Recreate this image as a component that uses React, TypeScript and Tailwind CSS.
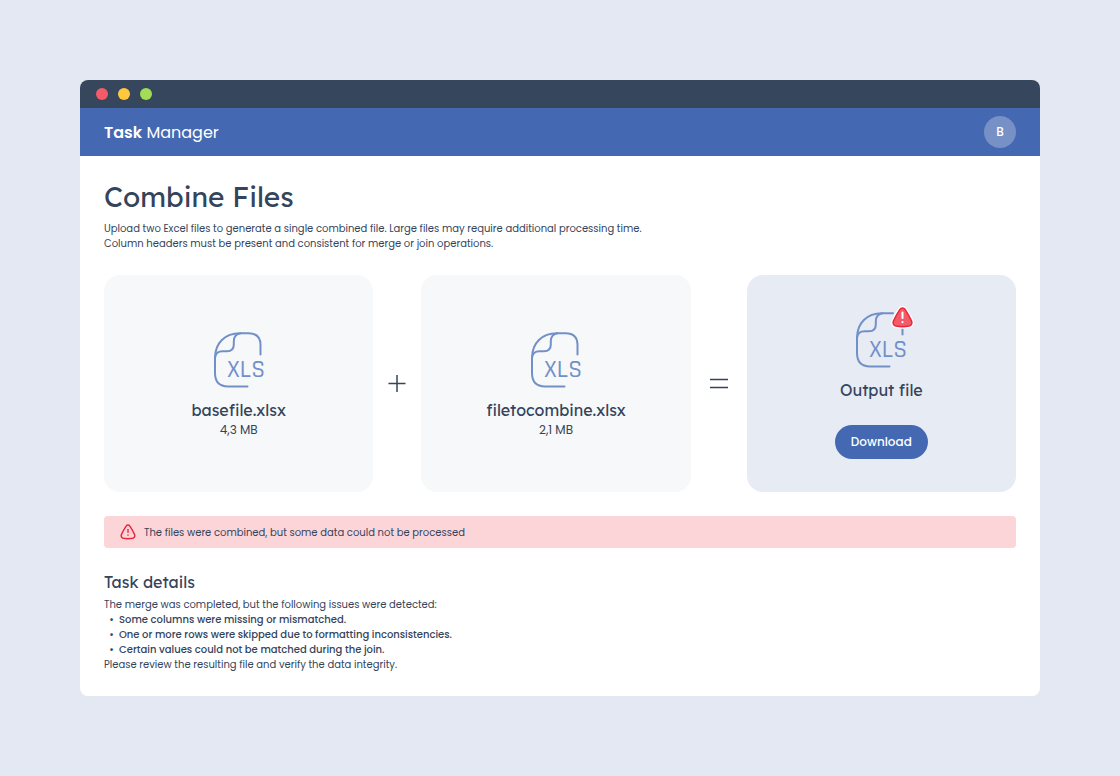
import type { ReactNode } from "react";

const issues = [
  "Some columns were missing or mismatched.",
  "One or more rows were skipped due to formatting inconsistencies.",
  "Certain values could not be matched during the join.",
];

const TRIANGLE_PATH =
  "M8.4 2.9C9.6.9 12.4.9 13.6 2.9C16 6.6 18.4 10.6 20.1 14.6C21 17 20 19 17.6 19.6C13.4 20.4 8.6 20.4 4.4 19.6C2 19 1 17 1.9 14.6C3.6 10.6 6 6.6 8.4 2.9Z";

function XlsIcon({ hasWarning = false }: { hasWarning?: boolean }) {
  return (
    <svg
      viewBox="0 0 64 64"
      className="h-16 w-16 overflow-visible"
      fill="none"
      stroke="#7290c8"
      strokeWidth="2"
      strokeLinecap="round"
      strokeLinejoin="round"
      aria-hidden="true"
    >
      {hasWarning ? (
        <path d="M53.5 27.5V20M44 6.3H33C18 6.3 8 16 8 31V46C8 55 12.5 59.4 21 59.4H40.5" />
      ) : (
        <path d="M53.5 27.5V18C53.5 10 49.5 6.3 41.5 6.3H33C18 6.3 8 16 8 31V46C8 55 12.5 59.4 21 59.4H40.5" />
      )}
      <path d="M8 30.5C8.6 26.5 11.5 24.3 15.5 24.3H20C24.8 24.3 26.8 22.3 26.8 17.5V14.5C26.8 9.8 29 7 33.5 6.3" />
      <text
        x="20"
        y="50"
        fill="#7290c8"
        stroke="none"
        className="font-['Rajdhani','Roboto',sans-serif] text-[25px] font-medium"
      >
        XLS
      </text>
      {hasWarning && (
        <g transform="translate(42.5 -0.5)">
          <path d={TRIANGLE_PATH} stroke="#ffffff" strokeWidth="4" />
          <path d={TRIANGLE_PATH} fill="#f45b69" stroke="#e8283a" strokeWidth="1.5" />
          <path d="M11 6V11.6M11 15.6V15.7" stroke="#ffffff" />
        </g>
      )}
    </svg>
  );
}

interface FileCardProps {
  name: string;
  size: string;
}

function FileCard({ name, size }: FileCardProps) {
  return (
    <div className="flex flex-1 flex-col items-center justify-center rounded-2xl bg-[#f7f8fa] pb-[3px]">
      <XlsIcon />
      <p className="mt-2 font-['Lexend','Poppins',sans-serif] text-base leading-[23px] font-[450]">{name}</p>
      <p className="text-xs leading-[15px]">{size}</p>
    </div>
  );
}

function Operator({ children, className }: { children: ReactNode; className: string }) {
  return (
    <div className={`flex shrink-0 items-center justify-center pb-px ${className}`}>
      <svg
        viewBox="0 0 18 18"
        className="h-[18px] w-[18px]"
        stroke="#34445b"
        strokeWidth="1.5"
        aria-hidden="true"
      >
        {children}
      </svg>
    </div>
  );
}

export default function App() {
  return (
    <div className="min-h-screen bg-[#e3e8f3] p-20 font-['Poppins','Inter',sans-serif] text-[#34445b]">
      <div className="overflow-hidden rounded-lg bg-white">
        {/* Window bar */}
        <div className="flex h-7 items-center gap-2.5 bg-[#36465c] px-4">
          <span className="h-3 w-3 rounded-full bg-[#f45b69]" />
          <span className="h-3 w-3 rounded-full bg-[#ffc83d]" />
          <span className="h-3 w-3 rounded-full bg-[#a3dc55]" />
        </div>

        <header className="flex h-12 items-center justify-between bg-[#4468b1] px-6 text-white">
          <p className="text-base leading-[25px]">
            <span className="font-semibold">Task</span> Manager
          </p>
          <button
            type="button"
            className="h-8 w-8 rounded-full bg-[#7790c6] text-xs font-medium"
          >
            B
          </button>
        </header>

        <main className="p-6">
          <h1 className="font-['Lexend','Poppins',sans-serif] text-[28px] leading-[34px] font-[450]">Combine Files</h1>
          <p className="mt-[7px] text-[10px] leading-[15px]">
            Upload two Excel files to generate a single combined file. Large files may require additional processing time.
            <br />
            Column headers must be present and consistent for merge or join operations.
          </p>

          <div className="mt-6 flex">
            <FileCard name="basefile.xlsx" size="4,3 MB" />
            <Operator className="w-12">
              <path d="M9 1V18M0.5 9.5H17.5" />
            </Operator>
            <FileCard name="filetocombine.xlsx" size="2,1 MB" />
            <Operator className="w-14">
              <path d="M0 5.5H18M0 13.5H18" />
            </Operator>
            <div className="flex flex-1 flex-col items-center rounded-2xl bg-[#e7ebf4] pt-8 pb-[33px]">
              <XlsIcon hasWarning />
              <p className="mt-2 font-['Lexend','Poppins',sans-serif] text-base leading-[23px] font-[450]">Output file</p>
              <button
                type="button"
                className="mt-[23px] h-[34px] rounded-full bg-[#4468b1] px-4 text-xs font-medium text-white"
              >
                Download
              </button>
            </div>
          </div>

          <div
            role="alert"
            className="mt-6 flex h-8 items-center gap-2 rounded bg-[#fcd5d9] px-4 text-[10px]"
          >
            <svg viewBox="0 0 22 22" className="h-4 w-4" fill="none" stroke="#e8283a" strokeWidth="2" strokeLinecap="round" aria-hidden="true">
              <path d={TRIANGLE_PATH} />
              <path d="M11 7.5V11.5M11 15.2V15.3" />
            </svg>
            <p>The files were combined, but some data could not be processed</p>
          </div>

          <section className="mt-6">
            <h2 className="font-['Lexend','Poppins',sans-serif] text-base leading-5 font-[450]">Task details</h2>
            <div className="mt-[5px] text-[10px] leading-[15px]">
              <p>The merge was completed, but the following issues were detected:</p>
              <ul className="font-medium">
                {issues.map((issue) => (
                  <li key={issue} className="flex">
                    <span className="w-[15px] text-center">•</span>
                    {issue}
                  </li>
                ))}
              </ul>
              <p>Please review the resulting file and verify the data integrity.</p>
            </div>
          </section>
        </main>
      </div>
    </div>
  );
}
